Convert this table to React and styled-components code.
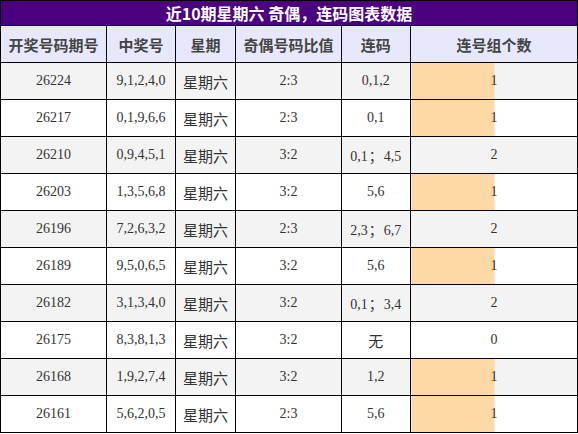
import React from 'react';
import styled, {createGlobalStyle} from 'styled-components';

const rows = [
  {issue: '26224', nums: '9,1,2,4,0', ratio: '2:3', lian: '0,1,2', groups: 1},
  {issue: '26217', nums: '0,1,9,6,6', ratio: '2:3', lian: '0,1', groups: 1},
  {issue: '26210', nums: '0,9,4,5,1', ratio: '3:2', lian: '0,1；4,5', groups: 2},
  {issue: '26203', nums: '1,3,5,6,8', ratio: '3:2', lian: '5,6', groups: 1},
  {issue: '26196', nums: '7,2,6,3,2', ratio: '2:3', lian: '2,3；6,7', groups: 2},
  {issue: '26189', nums: '9,5,0,6,5', ratio: '3:2', lian: '5,6', groups: 1},
  {issue: '26182', nums: '3,1,3,4,0', ratio: '3:2', lian: '0,1；3,4', groups: 2},
  {issue: '26175', nums: '8,3,8,1,3', ratio: '3:2', lian: '无', groups: 0},
  {issue: '26168', nums: '1,9,2,7,4', ratio: '3:2', lian: '1,2', groups: 1},
  {issue: '26161', nums: '5,6,2,0,5', ratio: '2:3', lian: '5,6', groups: 1},
];

const heads = ['开奖号码期号', '中奖号', '星期', '奇偶号码比值', '连码', '连号组个数'];
const widths = [105, 68, 60, 104, 69, 165];

const Global = createGlobalStyle`
  body {
    margin: 0;
    background: #fff;
  }
`;

const Table = styled.table`
  width: 578px;
  border-collapse: collapse;
  table-layout: fixed;
  border: 1px solid #000;
`;

const TitleCell = styled.th`
  height: 24px;
  padding: 0;
  background: #4b0080;
  color: #fff;
  font-family: "Noto Sans CJK SC", "Liberation Sans", sans-serif;
  font-size: 16px;
  font-weight: bold;
  line-height: 24px;
  text-align: center;
  border: 1px solid #000;
`;

const HeadCell = styled.th`
  height: 36px;
  padding: 0;
  background: #e8e8fc;
  color: #444;
  font-family: "Noto Sans CJK SC", sans-serif;
  font-size: 15px;
  font-weight: bold;
  text-align: center;
  border: 1px solid #000;
`;

const Row = styled.tr`
  background: ${p => (p.$odd ? '#f3f3f3' : '#fff')};
`;

const Cell = styled.td`
  height: 36px;
  padding: 0;
  text-align: center;
  border: 1px solid #000;
  color: #333;
  font-family: ${p => (p.$cjk ? '"Noto Sans CJK SC", sans-serif' : '"Liberation Serif", "Noto Sans CJK SC", serif')};
  font-size: ${p => (p.$cjk ? '15px' : '14px')};
  white-space: nowrap;
`;

const BarCell = styled(Cell)`
  background: ${p =>
    p.$bar ? 'linear-gradient(to right, #fed8a5 0, #fed8a5 50%, transparent 50%)' : 'transparent'};
`;

const Semi = styled.span`
  font-family: "Noto Sans CJK SC", sans-serif;
  font-size: 14px;
  margin: 0 1px;
`;

const renderLian = (text) => {
  if (text === '无') return text;
  const parts = text.split('；');
  return parts.map((p, i) => (
    <React.Fragment key={i}>
      {i > 0 && <Semi>；</Semi>}
      {p}
    </React.Fragment>
  ));
};

const App = () => {
  return (
    <>
      <Global />
      <Table>
        <colgroup>
          {widths.map((w, i) => <col key={i} style={{width: w}} />)}
        </colgroup>
        <thead>
          <tr>
            <TitleCell colSpan={6}>近10期星期六 奇偶，连码图表数据</TitleCell>
          </tr>
          <tr>
            {heads.map(h => <HeadCell key={h}>{h}</HeadCell>)}
          </tr>
        </thead>
        <tbody>
          {rows.map((r, i) => (
            <Row key={r.issue} $odd={i % 2 === 0}>
              <Cell>{r.issue}</Cell>
              <Cell>{r.nums}</Cell>
              <Cell $cjk>星期六</Cell>
              <Cell>{r.ratio}</Cell>
              <Cell $cjk={r.lian === '无'}>{renderLian(r.lian)}</Cell>
              <BarCell $bar={r.groups === 1}>{r.groups}</BarCell>
            </Row>
          ))}
        </tbody>
      </Table>
    </>
  );
};

export default App;
